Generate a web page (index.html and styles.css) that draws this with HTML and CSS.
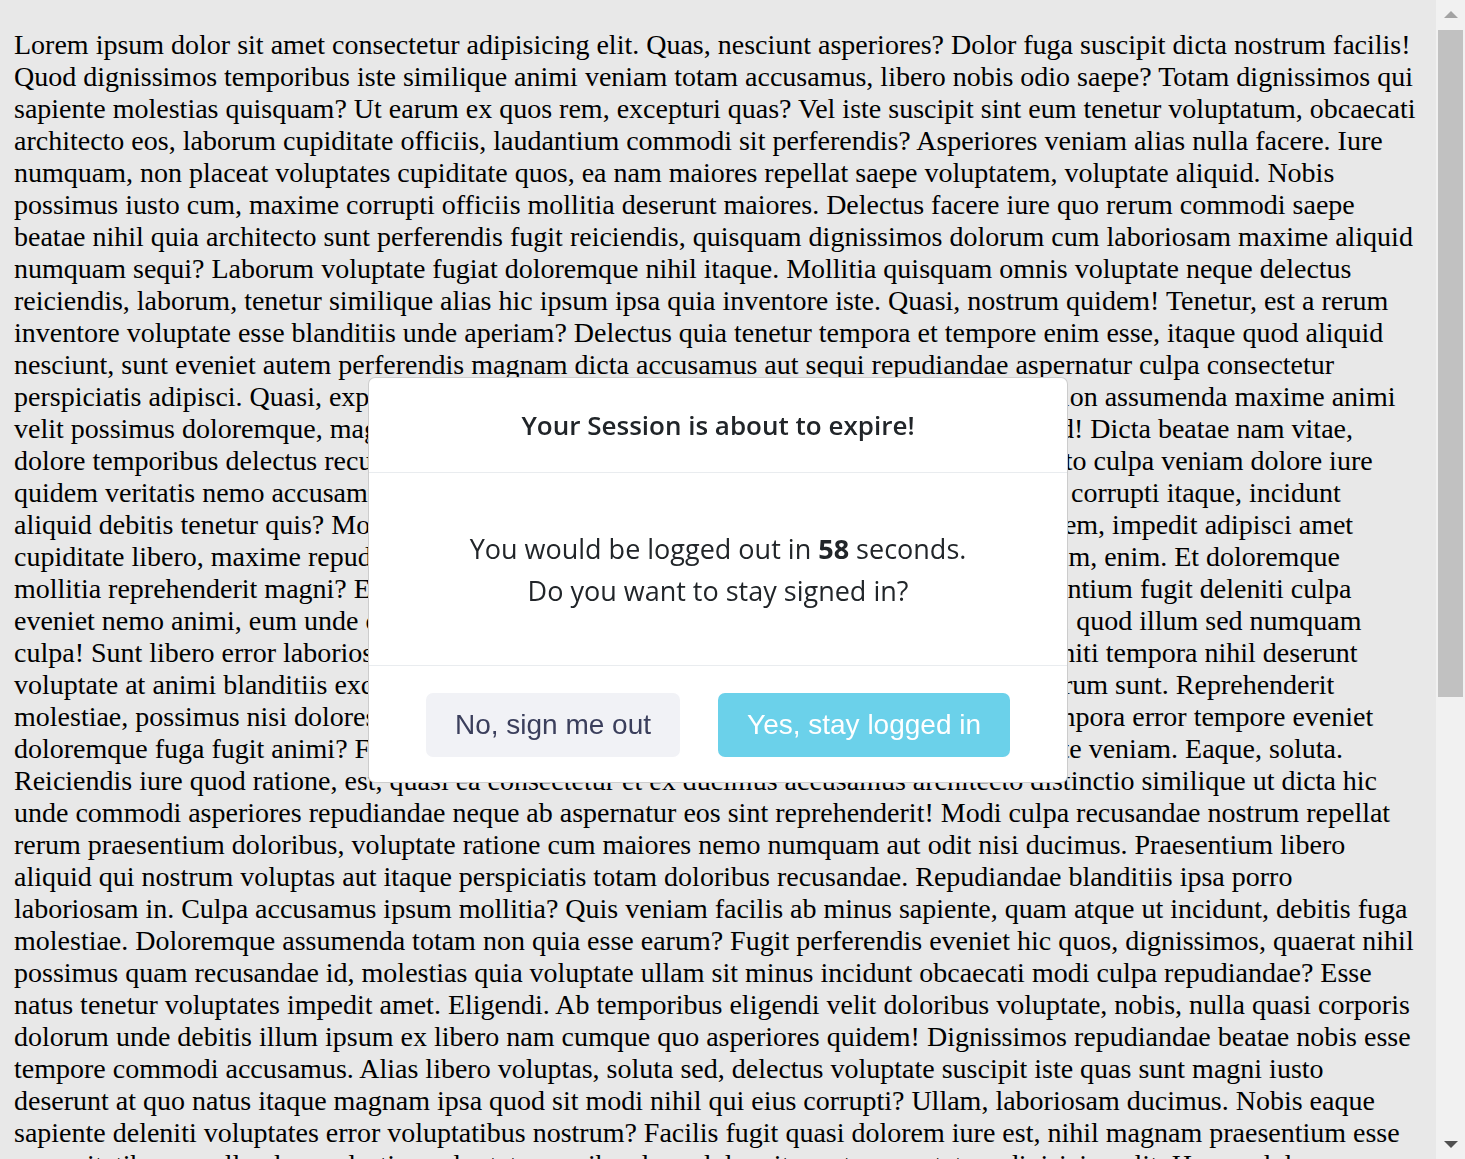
FILE: index.html
```html
<!DOCTYPE html>
<html lang="en">
<head>
<meta charset="utf-8">
<title>Session timeout</title>
<link rel="stylesheet" href="styles.css">
</head>
<body>
<main class="page">
<p class="lorem">Lorem ipsum dolor sit amet consectetur adipisicing elit. Quas, nesciunt asperiores? Dolor fuga suscipit dicta nostrum facilis! Quod dignissimos temporibus iste similique animi veniam totam accusamus, libero nobis odio saepe? Totam dignissimos qui sapiente molestias quisquam? Ut earum ex quos rem, excepturi quas? Vel iste suscipit sint eum tenetur voluptatum, obcaecati architecto eos, laborum cupiditate officiis, laudantium commodi sit perferendis? Asperiores veniam alias nulla facere. Iure numquam, non placeat voluptates cupiditate quos, ea nam maiores repellat saepe voluptatem, voluptate aliquid. Nobis possimus iusto cum, maxime corrupti officiis mollitia deserunt maiores. Delectus facere iure quo rerum commodi saepe beatae nihil quia architecto sunt perferendis fugit reiciendis, quisquam dignissimos dolorum cum laboriosam maxime aliquid numquam sequi? Laborum voluptate fugiat doloremque nihil itaque. Mollitia quisquam omnis voluptate neque delectus reiciendis, laborum, tenetur similique alias hic ipsum ipsa quia inventore iste. Quasi, nostrum quidem! Tenetur, est a rerum inventore voluptate esse blanditiis unde aperiam? Delectus quia tenetur tempora et tempore enim esse, itaque quod aliquid nesciunt, sunt eveniet autem perferendis magnam dicta accusamus aut sequi repudiandae aspernatur culpa consectetur perspiciatis adipisci. Quasi, explicabo eos nisi quae dolor, iusto libero dolore quas ipsa aut ration assumenda maxime animi velit possimus doloremque, magni repellat quas doloribus rem inventore quia ipsam odio quod! Dicta beatae nam vitae, dolore temporibus delectus recusandae, in ipsum totam sunt voluptates earum officiis architecto culpa veniam dolore iure quidem veritatis nemo accusamus quam voluptatem eligendi tempora, officiis quidem dolores corrupti itaque, incidunt aliquid debitis tenetur quis? Molestias quibusdam at ipsa natus sequi, ipsum quo doloribus lorem, impedit adipisci amet cupiditate libero, maxime repudiandae quas numquam optio dolorem minus sint deserunt harum, enim. Et doloremque mollitia reprehenderit magni? Eius sint at ipsam voluptas reprehenderit, eos dolorem et praesentium fugit deleniti culpa eveniet nemo animi, eum unde odit vero assumenda perspiciatis nam fugiat eos tempore dicta, quod illum sed numquam culpa! Sunt libero error laboriosam, quod nostrum reprehenderit accusantium! Ipsa, quas deleniti tempora nihil deserunt voluptate at animi blanditiis excepturi, optio quas nulla magni vitae dolorem ipsum et odio harum sunt. Reprehenderit molestiae, possimus nisi dolores assumenda fugiat vitae mollitia nemo, eligendi numquam tempora error tempore eveniet doloremque fuga fugit animi? Facilis minima earum, ipsa dolorum magni minus quas voluptate veniam. Eaque, soluta. Reiciendis iure quod ratione, est, quasi ea consectetur et ex ducimus accusamus architecto distinctio similique ut dicta hic unde commodi asperiores repudiandae neque ab aspernatur eos sint reprehenderit! Modi culpa recusandae nostrum repellat rerum praesentium doloribus, voluptate ratione cum maiores nemo numquam aut odit nisi ducimus. Praesentium libero aliquid qui nostrum voluptas aut itaque perspiciatis totam doloribus recusandae. Repudiandae blanditiis ipsa porro laboriosam in. Culpa accusamus ipsum mollitia? Quis veniam facilis ab minus sapiente, quam atque ut incidunt, debitis fuga molestiae. Doloremque assumenda totam non quia esse earum? Fugit perferendis eveniet hic quos, dignissimos, quaerat nihil possimus quam recusandae id, molestias quia voluptate ullam sit minus incidunt obcaecati modi culpa repudiandae? Esse natus tenetur voluptates impedit amet. Eligendi. Ab temporibus eligendi velit doloribus voluptate, nobis, nulla quasi corporis dolorum unde debitis illum ipsum ex libero nam cumque quo asperiores quidem! Dignissimos repudiandae beatae nobis esse tempore commodi accusamus. Alias libero voluptas, soluta sed, delectus voluptate suscipit iste quas sunt magni iusto deserunt at quo natus itaque magnam ipsa quod sit modi nihil qui eius corrupti? Ullam, laboriosam ducimus. Nobis eaque sapiente deleniti voluptates error voluptatibus nostrum? Facilis fugit quasi dolorem iure est, nihil magnam praesentium esse necessitatibus repellendus molestias voluptatum quibusdam, dolor sit amet consectetur adipisicing elit. Harum dolorem quaerat.</p>
</main>

<div class="backdrop"></div>

<div class="modal-wrap">
  <div class="modal" role="dialog" aria-labelledby="modal-title">
    <header class="modal-header">
      <h5 class="modal-title" id="modal-title">Your Session is about to expire!</h5>
    </header>
    <div class="modal-body">
      <p class="modal-text">You would be logged out in <strong>58</strong> seconds.</p>
      <p class="modal-text">Do you want to stay signed in?</p>
    </div>
    <footer class="modal-footer">
      <button class="btn btn-light" type="button">No, sign me out</button>
      <button class="btn btn-info" type="button">Yes, stay logged in</button>
    </footer>
  </div>
</div>

<div class="scrollbar" aria-hidden="true">
  <div class="sb-btn"><span class="sb-arrow-up"></span></div>
  <div class="sb-track"><div class="sb-thumb"></div></div>
  <div class="sb-btn"><span class="sb-arrow-down"></span></div>
</div>
</body>
</html>
```

FILE: styles.css
```css
html, body {
  margin: 0;
  padding: 0;
  height: 100%;
  overflow: hidden;
}

body {
  background: #ffffff;
  color: #000;
  font-family: "Liberation Serif", "Times New Roman", serif;
  font-size: 28px;
  line-height: 32px;
}

.page {
  padding: 0 43px 0 14px;
}

.lorem {
  margin: 29px 0 28px;
}

.backdrop {
  position: fixed;
  inset: 0;
  background: rgba(0, 0, 0, 0.09);
}

.modal-wrap {
  position: fixed;
  top: 0;
  left: 0;
  right: 29px;
  bottom: 0;
  display: flex;
  align-items: center;
  justify-content: center;
}

.modal {
  width: 700px;
  box-sizing: border-box;
  background: #fff;
  border: 1px solid rgba(0, 0, 0, 0.2);
  border-radius: 7px;
  font-family: "Open Sans", "Noto Sans", sans-serif;
  color: #212529;
  text-align: center;
}

.modal-header {
  padding: 26px 28px;
  border-bottom: 1px solid #e9ecef;
}

.modal-title {
  margin: 0;
  font-size: 26px;
  line-height: 42px;
  font-weight: 600;
  color: #212529;
}

.modal-body {
  padding: 55px 28px 53px;
  border-bottom: 1px solid #e9ecef;
}

.modal-text {
  margin: 0;
  font-size: 27px;
  line-height: 42px;
}

.modal-text strong {
  font-weight: 700;
}

.modal-footer {
  display: flex;
  justify-content: center;
  gap: 38px;
  padding: 27px 28px 25px;
}

.btn {
  font-family: "Liberation Sans", Arial, sans-serif;
  font-size: 28px;
  line-height: 32px;
  padding: 16px 29px;
  border: 0;
  border-radius: 7px;
  cursor: pointer;
}

.btn-light {
  background: #f1f2f6;
  color: #3b3f5c;
}

.btn-info {
  background: #6bd1ea;
  color: #ffffff;
}

.scrollbar {
  position: fixed;
  top: 0;
  right: 0;
  bottom: 0;
  width: 29px;
  background: #f1f1f1;
  display: flex;
  flex-direction: column;
}

.sb-btn {
  height: 29px;
  display: flex;
  align-items: center;
  justify-content: center;
  flex: none;
}

.sb-track {
  flex: 1;
  padding: 1px 2px;
}

.sb-thumb {
  height: 667px;
  background: #c1c1c1;
}

.sb-arrow-up {
  width: 0;
  height: 0;
  border-left: 7px solid transparent;
  border-right: 7px solid transparent;
  border-bottom: 7px solid #a3a3a3;
}

.sb-arrow-down {
  width: 0;
  height: 0;
  border-left: 7px solid transparent;
  border-right: 7px solid transparent;
  border-top: 7px solid #505050;
}
```
